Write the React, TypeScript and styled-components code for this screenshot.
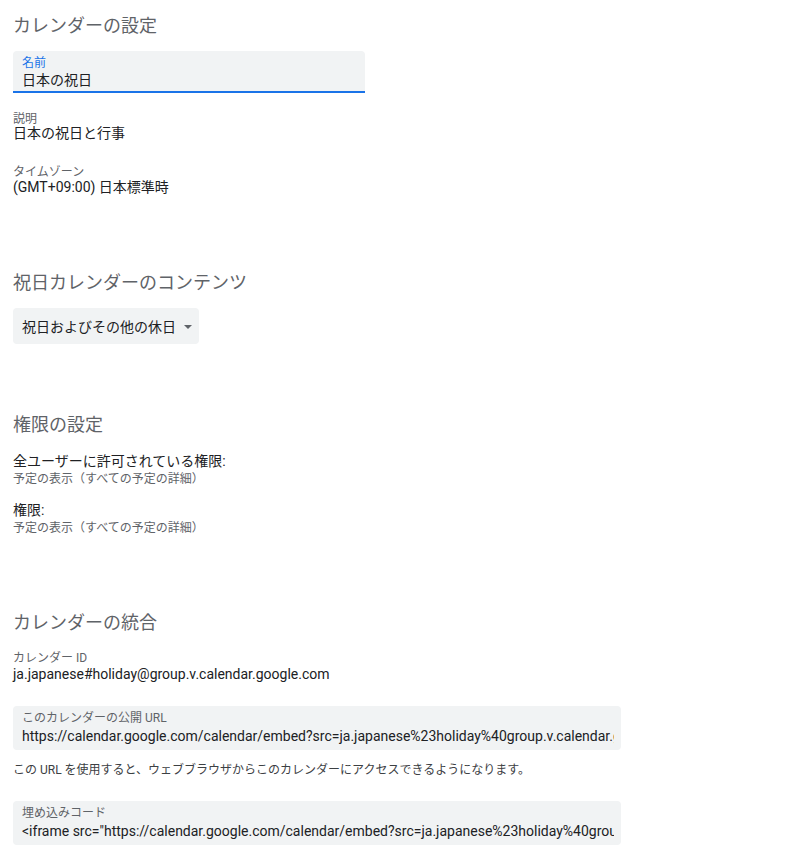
import React from 'react';
import styled, { createGlobalStyle } from 'styled-components';

const GlobalStyle = createGlobalStyle`
  body {
    margin: 0;
    background: #ffffff;
    font-family: Roboto, "Noto Sans CJK JP", "Noto Sans", sans-serif;
    color: #202124;
  }
`;

const Page = styled.div`
  display: flex;
  flex-direction: column;
  padding: 12px 0 0 13px;
  width: 608px;
`;

const Section = styled.section<{ gapBefore?: number }>`
  display: flex;
  flex-direction: column;
  margin-top: ${({ gapBefore }) => gapBefore ?? 0}px;
`;

const SectionTitle = styled.h2`
  margin: 2px 0 13px;
  font-size: 18px;
  line-height: 24px;
  font-weight: 400;
  color: #5f6368;
`;

const FilledField = styled.div<{ width: number; focused?: boolean }>`
  display: flex;
  flex-direction: column;
  width: ${({ width }) => width}px;
  box-sizing: border-box;
  padding: 4px 7px ${({ focused }) => (focused ? 2 : 4)}px 9px;
  background: #f1f3f4;
  border-radius: ${({ focused }) => (focused ? '4px 4px 0 0' : '4px')};
  border-bottom: ${({ focused }) => (focused ? '2px solid #1a73e8' : 'none')};
  overflow: hidden;
`;

const FieldLabel = styled.div<{ focused?: boolean }>`
  font-size: 12px;
  line-height: 16px;
  color: ${({ focused }) => (focused ? '#1a73e8' : '#5f6368')};
`;

const FieldValue = styled.div<{ lh?: number }>`
  font-size: 14px;
  line-height: ${({ lh }) => lh ?? 18}px;
  color: #202124;
  white-space: nowrap;
  overflow: hidden;
`;

const Info = styled.div<{ gapBefore?: number }>`
  display: flex;
  flex-direction: column;
  margin-top: ${({ gapBefore }) => gapBefore ?? 0}px;
`;

const InfoLabel = styled.div<{ lh?: number }>`
  font-size: 12px;
  line-height: ${({ lh }) => lh ?? 14}px;
  color: #5f6368;
`;

const InfoValue = styled.div<{ lh?: number }>`
  font-size: 14px;
  line-height: ${({ lh }) => lh ?? 16}px;
  color: #202124;
`;

const PermTitle = styled.div<{ gapBefore?: number }>`
  margin-top: ${({ gapBefore }) => gapBefore ?? 0}px;
  font-size: 14px;
  line-height: 20px;
  color: #202124;
`;

const PermDetail = styled.div`
  font-size: 12px;
  line-height: 16px;
  color: #5f6368;
`;

const Dropdown = styled.button`
  display: flex;
  align-items: center;
  gap: 8px;
  align-self: flex-start;
  height: 36px;
  padding: 0 7px 0 9px;
  border: none;
  border-radius: 4px;
  background: #f1f3f4;
  font-family: inherit;
  font-size: 14px;
  font-weight: 400;
  color: #202124;
  cursor: pointer;
`;

const Caret = styled.span`
  width: 0;
  height: 0;
  border-left: 4px solid transparent;
  border-right: 4px solid transparent;
  border-top: 4px solid #5f6368;
  margin-top: 1px;
`;

const Note = styled.p`
  margin: 12px 0 23px;
  font-size: 12px;
  line-height: 16px;
  color: #3c4043;
`;

export default function App() {
  return (
    <>
      <GlobalStyle />
      <Page>
        <Section>
          <SectionTitle>カレンダーの設定</SectionTitle>
          <FilledField width={352} focused>
            <FieldLabel focused>名前</FieldLabel>
            <FieldValue>日本の祝日</FieldValue>
          </FilledField>
          <Info gapBefore={19}>
            <InfoLabel>説明</InfoLabel>
            <InfoValue lh={14}>日本の祝日と行事</InfoValue>
          </Info>
          <Info gapBefore={25}>
            <InfoLabel>タイムゾーン</InfoLabel>
            <InfoValue>(GMT+09:00) 日本標準時</InfoValue>
          </Info>
        </Section>

        <Section gapBefore={74}>
          <SectionTitle>祝日カレンダーのコンテンツ</SectionTitle>
          <Dropdown>
            祝日およびその他の休日
            <Caret />
          </Dropdown>
        </Section>

        <Section gapBefore={67}>
          <SectionTitle>権限の設定</SectionTitle>
          <PermTitle gapBefore={1}>全ユーザーに許可されている権限:</PermTitle>
          <PermDetail>予定の表示（すべての予定の詳細）</PermDetail>
          <PermTitle gapBefore={13}>権限:</PermTitle>
          <PermDetail>予定の表示（すべての予定の詳細）</PermDetail>
        </Section>

        <Section gapBefore={73}>
          <SectionTitle>カレンダーの統合</SectionTitle>
          <Info gapBefore={2}>
            <InfoLabel lh={16}>カレンダー ID</InfoLabel>
            <InfoValue>ja.japanese#holiday@group.v.calendar.google.com</InfoValue>
          </Info>
          <Info gapBefore={24}>
            <FilledField width={608}>
              <FieldLabel>このカレンダーの公開 URL</FieldLabel>
              <FieldValue lh={20}>
                https://calendar.google.com/calendar/embed?src=ja.japanese%23holiday%40group.v.calendar.google.com&amp;ctz=Asia%2FTokyo
              </FieldValue>
            </FilledField>
          </Info>
          <Note>この URL を使用すると、ウェブブラウザからこのカレンダーにアクセスできるようになります。</Note>
          <FilledField width={608}>
            <FieldLabel>埋め込みコード</FieldLabel>
            <FieldValue lh={20}>
              {'<iframe src="https://calendar.google.com/calendar/embed?src=ja.japanese%23holiday%40group.v.calendar.google.com&ctz=Asia%2FTokyo" style="border: 0" width="800" height="600" frameborder="0" scrolling="no"></iframe>'}
            </FieldValue>
          </FilledField>
        </Section>
      </Page>
    </>
  );
}
